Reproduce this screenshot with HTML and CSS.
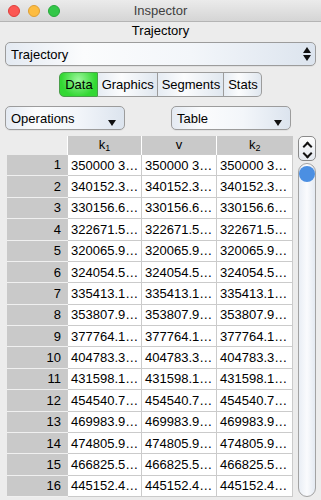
FILE: index.html
```html
<!DOCTYPE html>
<html lang="en">
  <head>
    <meta charset="UTF-8" />
    <meta name="viewport" content="width=device-width, initial-scale=1.0" />
    <title>Inspector</title>
    <link rel="stylesheet" href="styles.css">
  </head>
  <body>
    <div class="window">
      <!-- Title bar -->
      <div class="titlebar">
        <div class="lights">
          <span class="light red"></span>
          <span class="light yellow"></span>
          <span class="light green"></span>
        </div>
        <div class="title">Inspector</div>
      </div>

      <div class="caption">Trajectory</div>

      <div class="popup wide">
        <span>Trajectory</span>
        <span class="stepper-arrows">
          <span class="tri up"></span>
          <span class="tri down"></span>
        </span>
      </div>

      <div class="segments">
        <div class="seg active">Data</div>
        <div class="seg">Graphics</div>
        <div class="seg">Segments</div>
        <div class="seg">Stats</div>
      </div>

      <div class="popup-row">
        <div class="popup small">
          <span>Operations</span>
          <span class="tri down"></span>
        </div>
        <div class="popup small">
          <span>Table</span>
          <span class="tri down"></span>
        </div>
      </div>

      <div class="data-area">
        <table class="grid">
          <thead>
            <tr>
              <th class="corner"></th>
              <th>k<sub>1</sub></th>
              <th>v</th>
              <th>k<sub>2</sub></th>
            </tr>
          </thead>
          <tbody id="gridBody">
            <!-- rows are filled in by the script below -->
          </tbody>
        </table>

        <div class="scroller">
          <div class="step-btn">
            <span class="chev up"></span>
            <span class="chev down"></span>
          </div>
          <div class="track">
            <div class="thumb"></div>
          </div>
        </div>
      </div>
    </div>

    <script>
      // Values shown in each row (same value in every column)
      const values = [
        "350000 3…", "340152.3…", "330156.6…", "322671.5…",
        "320065.9…", "324054.5…", "335413.1…", "353807.9…",
        "377764.1…", "404783.3…", "431598.1…", "454540.7…",
        "469983.9…", "474805.9…", "466825.5…", "445152.4…"
      ];

      const body = document.getElementById("gridBody");
      values.forEach((val, i) => {
        const row = document.createElement("tr");
        row.innerHTML = `
          <td class="num">${i + 1}</td>
          <td>${val}</td>
          <td>${val}</td>
          <td>${val}</td>
        `;
        body.appendChild(row);
      });
    </script>
  </body>
</html>
```

FILE: styles.css
```css
body {
  margin: 0;
  background: #ececec;
  font-family: "Liberation Sans", Arial, sans-serif;
  font-size: 13px;
  color: #000;
}
.window {
  width: 321px;
  height: 500px;
  overflow: hidden;
  background: #ececec;
}
.titlebar {
  position: relative;
  height: 21px;
  background: linear-gradient(to bottom, #ebebeb, #d5d5d5);
  border-bottom: 1px solid #b4b4b4;
}
.lights {
  position: absolute;
  left: 8px;
  top: 5px;
  display: flex;
  gap: 8px;
}
.light {
  width: 12px;
  height: 12px;
  border-radius: 50%;
  box-sizing: border-box;
}
.red {
  background: #fc5753;
  border: 1px solid #df3e3a;
}
.yellow {
  background: #fdbc40;
  border: 1px solid #de9f34;
}
.green {
  background: #33c748;
  border: 1px solid #27a83a;
}
.title {
  text-align: center;
  line-height: 22px;
  color: #404040;
  font-size: 13px;
}
.caption {
  text-align: center;
  height: 20px;
  line-height: 18px;
}
.popup {
  display: flex;
  align-items: center;
  justify-content: space-between;
  box-sizing: border-box;
  height: 24px;
  padding: 0 7px 0 5px;
  border: 1px solid #9c9c9c;
  border-radius: 5px;
  background: linear-gradient(to right, #e4eaf2, #fbfcfd 25%, #f3f6fa 60%, #dce4ee);
  box-shadow: 0 1px 0 rgba(0, 0, 0, 0.05);
}
.wide {
  margin: 0 5px;
  padding-right: 4px;
}
.stepper-arrows {
  display: flex;
  flex-direction: column;
  gap: 2px;
}
.tri {
  width: 0;
  height: 0;
  border-left: 4px solid transparent;
  border-right: 4px solid transparent;
}
.tri.up {
  border-bottom: 6px solid #111;
}
.tri.down {
  border-top: 6px solid #111;
}
.popup.small .tri.down {
  margin-top: 9px;
}
.segments {
  display: flex;
  justify-content: center;
  margin: 6px 0 0;
  height: 25px;
}
.seg {
  display: flex;
  align-items: center;
  padding: 0 3px 0 4px;
  border: 1px solid #9c9c9c;
  border-left: none;
  background: linear-gradient(to right, #e6ecf3, #fbfcfd 40%, #e0e7ef);
}
.seg:first-child {
  border-left: 1px solid #6a9a6a;
  border-radius: 5px 0 0 5px;
}
.seg:last-child {
  border-radius: 0 5px 5px 0;
}
.seg.active {
  background: radial-gradient(circle at 50% 30%, #9cf79c, #33d833 70%);
  border-color: #4a9e4a;
  padding: 0 4px 0 5px;
}
.popup-row {
  display: flex;
  gap: 46px;
  margin: 9px 0 0 5px;
}
.popup-row .popup {
  width: 120px;
  padding-right: 8px;
}
.data-area {
  display: flex;
  margin: 6px 0 0 7px;
}
.grid {
  border-collapse: collapse;
  table-layout: fixed;
  width: 286px;
}
.grid th {
  height: 18px;
  background: #c9c9c9;
  font-weight: normal;
  border-left: 1px solid #fff;
  padding: 0;
  line-height: 18px;
}
.grid th:nth-child(1) {
  width: 60px;
}
.grid th:nth-child(2) {
  width: 73px;
}
.grid th:nth-child(3) {
  width: 74px;
}
.grid th.corner {
  background: transparent;
  border: none;
}
.grid sub {
  font-size: 9px;
  vertical-align: -2px;
  line-height: 0;
}
.grid td {
  height: 19px;
  padding: 0 0 0 3px;
  background: #fff;
  border: 1px solid #cbcbcb;
  white-space: nowrap;
  overflow: hidden;
}
.grid td.num {
  background: #c9c9c9;
  text-align: right;
  padding: 0 6px 0 0;
  border: none;
  border-bottom: 1px solid #f0f0f0;
}
.scroller {
  display: flex;
  flex-direction: column;
  margin-left: 5px;
  width: 18px;
}
.step-btn {
  box-sizing: border-box;
  width: 18px;
  height: 25px;
  border: 1px solid #8a8a8a;
  border-radius: 5px;
  background: linear-gradient(to bottom, #fdfdfd, #e4e9f0);
  display: flex;
  flex-direction: column;
  align-items: center;
  justify-content: center;
  gap: 3px;
}
.chev {
  width: 5px;
  height: 5px;
  border-left: 2px solid #111;
  border-top: 2px solid #111;
}
.chev.up {
  transform: rotate(45deg);
  margin-top: 3px;
}
.chev.down {
  transform: rotate(225deg);
  margin-top: -3px;
}
.track {
  box-sizing: border-box;
  margin-top: 2px;
  height: 334px;
  border: 1px solid #a3a3a3;
  border-radius: 9px;
  background: linear-gradient(to right, #e9eef5, #fafbfd 50%, #e4eaf2);
  padding-top: 2px;
}
.thumb {
  width: 16px;
  height: 16px;
  border-radius: 50%;
  background: #4b8fe2;
  margin-left: 0;
}
```
